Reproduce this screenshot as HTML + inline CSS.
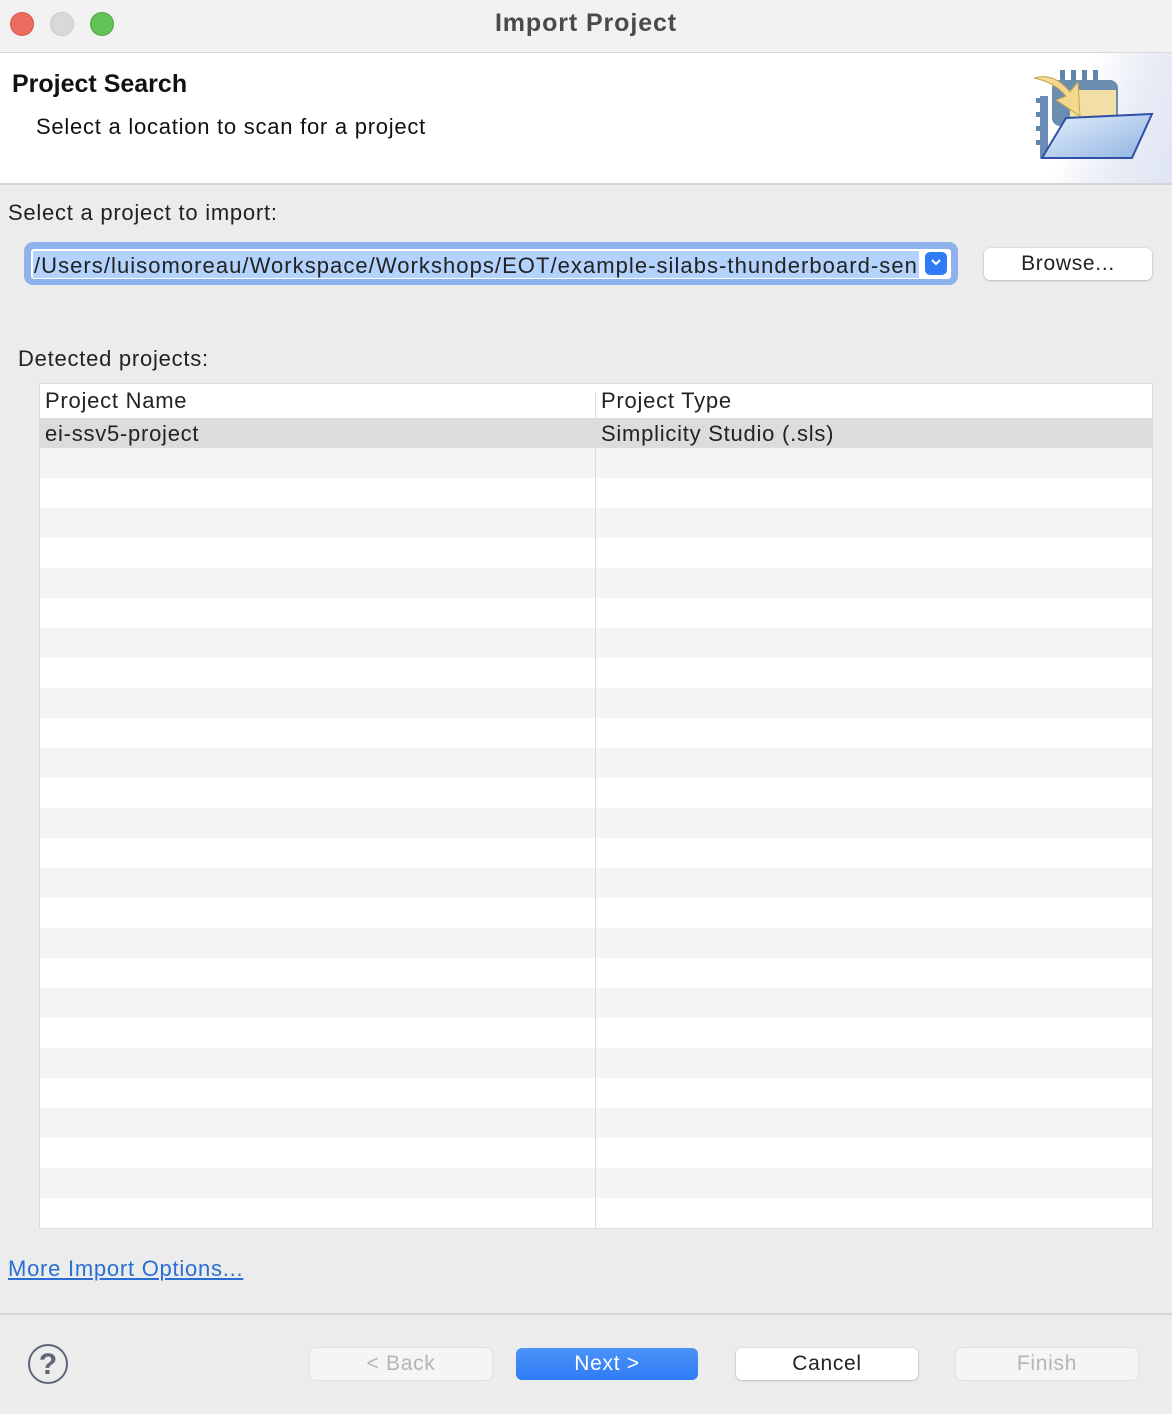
<!DOCTYPE html>
<html><head><meta charset="utf-8"><style>
*{margin:0;padding:0;box-sizing:border-box}
body{width:1172px;height:1414px;background:#ececec;font-family:"Liberation Sans",sans-serif;position:relative;overflow:hidden;color:#222}
.abs{position:absolute}
.tb{left:0;top:0;width:1172px;height:53px;background:#f3f2f2;border-bottom:1px solid #d8d8d8}
.dot{top:12px;width:24px;height:24px;border-radius:50%}
.hdr{left:0;top:53px;width:1172px;height:132px;background:#fff;border-bottom:2px solid #d5d5d5}
.t{font-size:22px;white-space:nowrap;letter-spacing:0.75px}
.tbl{left:39px;top:383px;width:1114px;height:846px;border:1px solid #dcdcdc;background:#fff;overflow:hidden}
.rows{left:0;top:64px;width:100%;height:780px;background:repeating-linear-gradient(#f4f5f5 0 30px,#fff 30px 60px)}
.btn{top:1348px;width:182px;height:32px;border-radius:6px;font-size:21px;text-align:center;line-height:32px;background:#fff;box-shadow:0 0.5px 2px rgba(0,0,0,.3);letter-spacing:0.7px}
</style></head><body>
<div class="abs tb"></div>
<div class="abs dot" style="left:10px;background:#ed6a5e;border:1px solid #d5574b"></div>
<div class="abs dot" style="left:50px;background:#d9d9d9;border:1px solid #c8c8c8"></div>
<div class="abs dot" style="left:90px;background:#61c454;border:1px solid #52a843"></div>
<div class="abs t" style="left:0;width:1172px;text-align:center;top:9px;font-size:25px;font-weight:bold;color:#4a4a4a;letter-spacing:0.9px">Import Project</div>
<div class="abs hdr"><div class="abs" style="right:0;top:0;width:160px;height:130px;background:linear-gradient(110deg,#fff 40%,#e8ecf6 70%,#dfe5f3)"></div></div>
<div class="abs t" style="left:12px;top:70px;font-size:25px;font-weight:bold;color:#111;letter-spacing:0">Project Search</div>
<div class="abs t" style="left:36px;top:114px;color:#111">Select a location to scan for a project</div>
<svg class="abs" style="left:1030px;top:66px" width="130" height="100" viewBox="0 0 130 100">
<g fill="#5e86ad"><rect x="30" y="4" width="5" height="10"/><rect x="41" y="4" width="5" height="10"/><rect x="52" y="4" width="5" height="10"/><rect x="63" y="4" width="5" height="10"/></g>
<rect x="22" y="14" width="66" height="46" rx="8" fill="#6a8db0"/>
<rect x="40" y="24" width="46" height="34" fill="#f1dfa6"/>
<g fill="#5e86ad"><rect x="6" y="32" width="10" height="5"/><rect x="6" y="46" width="10" height="5"/><rect x="6" y="60" width="10" height="5"/><rect x="6" y="74" width="10" height="5"/></g>
<path d="M4 12 Q24 6 40 26 L48 16 L50 50 L26 34 L36 30 Q24 16 4 12Z" fill="#f2d98e" stroke="#c9a44e"/>
<path d="M10 30 L10 92 L18 92 L18 30Z" fill="#6b8cb6"/>
<path d="M36 52 L122 48 L102 92 L12 92Z" fill="url(#g)" stroke="#2f4fa8" stroke-width="2"/>
<defs><linearGradient id="g" x1="0" y1="0" x2="1" y2="1"><stop offset="0" stop-color="#e5f0fc"/><stop offset="1" stop-color="#8fb3e2"/></linearGradient></defs>
</svg>
<div class="abs t" style="left:8px;top:200px">Select a project to import:</div>
<div class="abs" style="left:24px;top:242px;width:934px;height:43px;border-radius:9px;background:#8fb1ec"></div>
<div class="abs" style="left:31px;top:249px;width:920px;height:30px;background:#fff;border-radius:3px"></div>
<div class="abs" style="left:33px;top:251px;width:886px;height:27px;background:#b3d2fc"></div>
<div class="abs t" style="left:34px;top:253px;width:884px;overflow:hidden;letter-spacing:1.05px">/Users/luisomoreau/Workspace/Workshops/EOT/example-silabs-thunderboard-sense-2</div>
<div class="abs" style="left:925px;top:252px;width:22px;height:23px;border-radius:5px;background:#2f7cf6"></div>
<svg class="abs" style="left:929px;top:257px" width="14" height="12"><path d="M3 3 L7 7 L11 3" stroke="#fff" stroke-width="2" fill="none"/></svg>
<div class="abs btn" style="left:984px;top:248px;width:168px;height:32px;color:#222">Browse...</div>
<div class="abs t" style="left:18px;top:346px">Detected projects:</div>
<div class="abs tbl">
<div class="abs rows"></div>
<div class="abs" style="left:0;top:34px;width:100%;height:30px;background:#dcdcdc"></div>
<div class="abs" style="left:555px;top:8px;width:1px;height:840px;background:#dcdcdc"></div>
<div class="abs t" style="left:5px;top:4px">Project Name</div>
<div class="abs t" style="left:561px;top:4px">Project Type</div>
<div class="abs t" style="left:5px;top:37px">ei-ssv5-project</div>
<div class="abs t" style="left:561px;top:37px">Simplicity Studio (.sls)</div>
</div>
<div class="abs t" style="left:8px;top:1256px;color:#2a6fd6;text-decoration:underline">More Import Options...</div>
<div class="abs" style="left:0;top:1313px;width:1172px;height:2px;background:#d6d6d6"></div>
<div class="abs" style="left:28px;top:1344px;width:40px;height:40px;border-radius:50%;border:2px solid #5d6577;text-align:center;font-size:30px;line-height:37px;font-weight:bold;color:#5d6577">?</div>
<div class="abs btn" style="left:310px;background:#f5f5f5;color:#b5b5b5;box-shadow:0 0 1px rgba(0,0,0,.25)">&lt; Back</div>
<div class="abs btn" style="left:516px;background:linear-gradient(#4b93f8,#2f7bf5);color:#fff;box-shadow:none">Next &gt;</div>
<div class="abs btn" style="left:736px;color:#222">Cancel</div>
<div class="abs btn" style="left:956px;background:#f5f5f5;color:#b5b5b5;box-shadow:0 0 1px rgba(0,0,0,.25)">Finish</div>
</body></html>
